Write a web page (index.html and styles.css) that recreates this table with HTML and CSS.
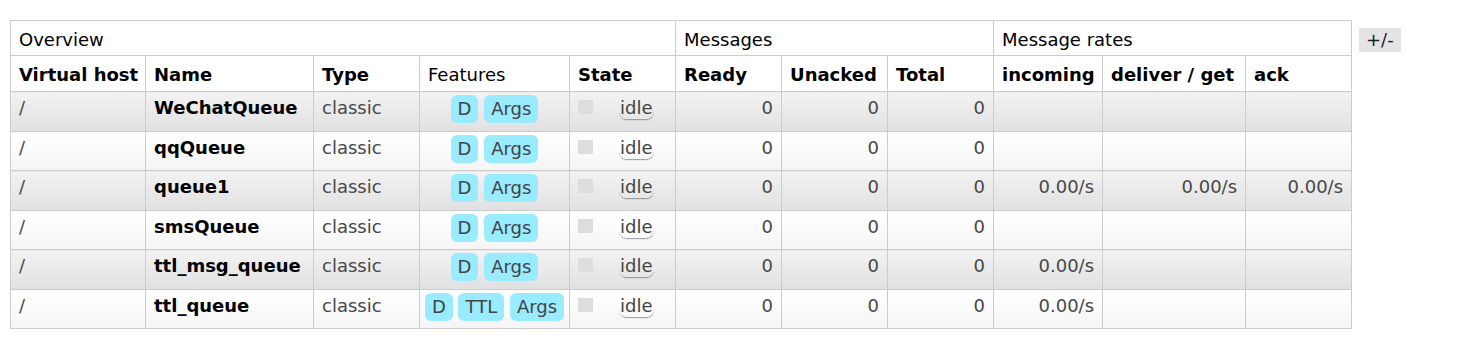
FILE: index.html
```html
<!DOCTYPE html>
<html>
<head>
<meta charset="utf-8">
<link rel="stylesheet" href="styles.css">
</head>
<body>
<div class="wrap">
  <table class="list">
    <colgroup>
      <col class="c-vhost"><col class="c-name"><col class="c-type"><col class="c-feat"><col class="c-state">
      <col class="c-num"><col class="c-num"><col class="c-num">
      <col class="c-in"><col class="c-del"><col class="c-ack">
    </colgroup>
    <thead>
      <tr class="group">
        <th colspan="5">Overview</th>
        <th colspan="3">Messages</th>
        <th colspan="3">Message rates</th>
      </tr>
      <tr class="cols">
        <th>Virtual host</th><th>Name</th><th>Type</th><th class="plain">Features</th><th>State</th>
        <th>Ready</th><th>Unacked</th><th>Total</th>
        <th>incoming</th><th>deliver / get</th><th>ack</th>
      </tr>
    </thead>
    <tbody>
      <tr class="alt1">
        <td>/</td><td class="name">WeChatQueue</td><td>classic</td>
        <td class="feat"><span class="badge">D</span> <span class="badge">Args</span></td>
        <td class="state"><span class="sq"></span><abbr class="idle">idle</abbr></td>
        <td class="r">0</td><td class="r">0</td><td class="r">0</td>
        <td class="r"></td><td class="r"></td><td class="r"></td>
      </tr>
      <tr class="alt2">
        <td>/</td><td class="name">qqQueue</td><td>classic</td>
        <td class="feat"><span class="badge">D</span> <span class="badge">Args</span></td>
        <td class="state"><span class="sq"></span><abbr class="idle">idle</abbr></td>
        <td class="r">0</td><td class="r">0</td><td class="r">0</td>
        <td class="r"></td><td class="r"></td><td class="r"></td>
      </tr>
      <tr class="alt1">
        <td>/</td><td class="name">queue1</td><td>classic</td>
        <td class="feat"><span class="badge">D</span> <span class="badge">Args</span></td>
        <td class="state"><span class="sq"></span><abbr class="idle">idle</abbr></td>
        <td class="r">0</td><td class="r">0</td><td class="r">0</td>
        <td class="r">0.00/s</td><td class="r">0.00/s</td><td class="r">0.00/s</td>
      </tr>
      <tr class="alt2">
        <td>/</td><td class="name">smsQueue</td><td>classic</td>
        <td class="feat"><span class="badge">D</span> <span class="badge">Args</span></td>
        <td class="state"><span class="sq"></span><abbr class="idle">idle</abbr></td>
        <td class="r">0</td><td class="r">0</td><td class="r">0</td>
        <td class="r"></td><td class="r"></td><td class="r"></td>
      </tr>
      <tr class="alt1">
        <td>/</td><td class="name">ttl_msg_queue</td><td>classic</td>
        <td class="feat"><span class="badge">D</span> <span class="badge">Args</span></td>
        <td class="state"><span class="sq"></span><abbr class="idle">idle</abbr></td>
        <td class="r">0</td><td class="r">0</td><td class="r">0</td>
        <td class="r">0.00/s</td><td class="r"></td><td class="r"></td>
      </tr>
      <tr class="alt2">
        <td>/</td><td class="name">ttl_queue</td><td>classic</td>
        <td class="feat"><span class="badge">D</span> <span class="badge">TTL</span> <span class="badge">Args</span></td>
        <td class="state"><span class="sq"></span><abbr class="idle">idle</abbr></td>
        <td class="r">0</td><td class="r">0</td><td class="r">0</td>
        <td class="r">0.00/s</td><td class="r"></td><td class="r"></td>
      </tr>
    </tbody>
  </table>
  <span class="toggle">+/-</span>
</div>
</body>
</html>
```

FILE: styles.css
```css
html, body {
  margin: 0;
  padding: 0;
  background: #fff;
}
body {
  font-family: "DejaVu Sans", Verdana, sans-serif;
  font-size: 18px;
  color: #484848;
}
.wrap {
  display: flex;
  align-items: flex-start;
  gap: 7px;
  padding: 20px 10px;
}
.list {
  border-collapse: collapse;
  table-layout: fixed;
  width: 1342px;
  border: 1px solid #ccc;
}
.list .c-vhost { width: 135px; }
.list .c-name { width: 168px; }
.list .c-type { width: 106px; }
.list .c-feat { width: 150px; }
.list .c-state { width: 106px; }
.list .c-num { width: 106px; }
.list .c-in { width: 109px; }
.list .c-del { width: 143px; }
.list .c-ack { width: 106px; }

.list th,
.list td {
  border: 1px solid #ccc;
  padding: 0 8px;
  line-height: 22px;
  text-align: left;
  white-space: nowrap;
  overflow: hidden;
}
.list .group th {
  font-weight: normal;
  color: #000;
  padding: 8px 8px 4px;
  vertical-align: top;
}
.list .cols th {
  font-weight: bold;
  color: #000;
  padding: 8px 8px 5px;
  vertical-align: top;
}
.list .cols th.plain { font-weight: normal; }

.list tbody td {
  vertical-align: top;
  padding: 5px 8px 12px;
}
.list tbody .alt2 td { padding-bottom: 11px; }
.list tbody td.r { text-align: right; }
.list tbody td.name { font-weight: bold; color: #000; }
.list tbody td.feat {
  text-align: center;
  padding: 3px 2px 0;
}
.list .alt1 td { background: linear-gradient(#f3f3f3, #e0e0e0); }
.list .alt2 td { background: linear-gradient(#ffffff, #f5f5f5); }

.badge {
  display: inline-block;
  background: #99ebff;
  color: #444;
  border-radius: 6px;
  padding: 0 7px;
  line-height: 28px;
  height: 28px;
  vertical-align: top;
}
.sq {
  display: inline-block;
  width: 15px;
  height: 14px;
  background: #dddddd;
  vertical-align: top;
  margin-top: 3px;
  margin-right: 26px;
}
abbr.idle {
  text-decoration: none;
  color: #444;
  border-bottom: 1px dotted #555;
  border-radius: 0 0 8px 8px;
  box-shadow: 0 1px 0 rgba(0,0,0,0.06);
  padding: 0 1px 1px;
}
.toggle {
  display: inline-block;
  margin-top: 8px;
  background: #e4e4e4;
  color: #222;
  padding: 0 7px;
  line-height: 24px;
  height: 24px;
}
```
